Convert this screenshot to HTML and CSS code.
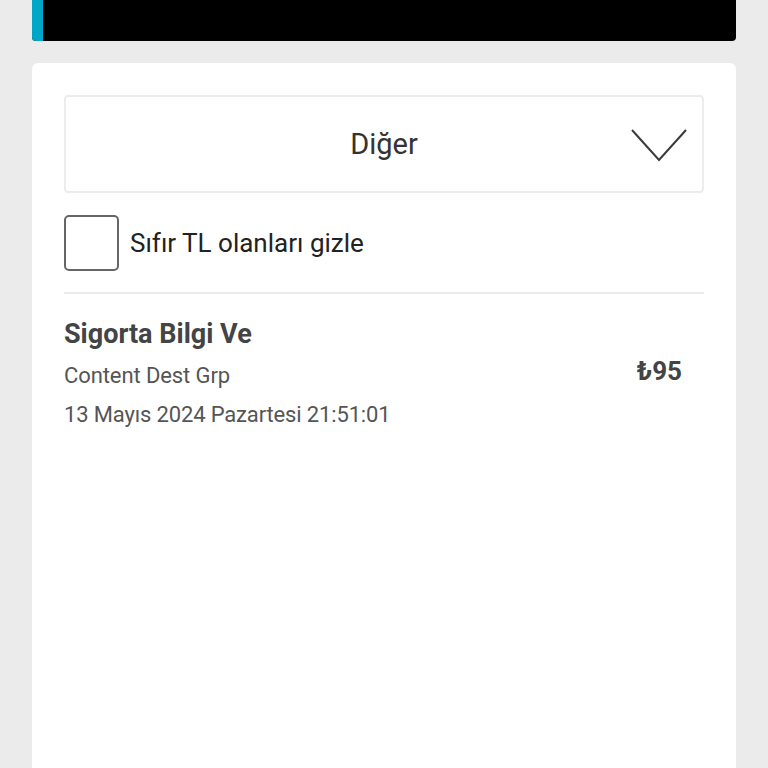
FILE: index.html
```html
<!DOCTYPE html>
<html lang="tr">
<head>
<meta charset="utf-8">
<link rel="stylesheet" href="styles.css">
</head>
<body>
<div class="page">
  <div class="topbar"><div class="accent"></div></div>
  <div class="card">
    <div class="select">
      <span class="select-text">Diğer</span>
      <svg class="chevron" width="56" height="33" viewBox="0 0 56 33"><path d="M1 1 L28 31 L55 1" fill="none" stroke="#3a3a3a" stroke-width="2"/></svg>
    </div>
    <label class="check-row">
      <span class="checkbox"></span>
      <span class="check-label">Sıfır TL olanları gizle</span>
    </label>
    <div class="divider"></div>
    <div class="item">
      <div class="item-info">
        <div class="item-title">Sigorta Bilgi Ve</div>
        <div class="item-sub">Content Dest Grp</div>
        <div class="item-date">13 Mayıs 2024 Pazartesi 21:51:01</div>
      </div>
      <div class="item-amount">₺95</div>
    </div>
  </div>
</div>
</body>
</html>
```
FILE: styles.css
```css
html, body {
  margin: 0;
  padding: 0;
  background: #ebebeb;
  font-family: Roboto, "Noto Sans", sans-serif;
  color: #333;
}
.page {
  padding: 0 32px;
  height: 768px;
  overflow: hidden;
}
.topbar {
  height: 41px;
  background: #000;
  border-radius: 0 0 4px 4px;
  display: flex;
}
.accent {
  width: 11px;
  background: #00a6c8;
  border-radius: 0 0 0 4px;
}
.card {
  margin-top: 22px;
  background: #fff;
  border-radius: 6px;
  padding: 32px 32px 0;
  min-height: 720px;
}
.select {
  height: 94px;
  border: 2px solid #ececec;
  border-radius: 4px;
  display: flex;
  align-items: center;
  justify-content: center;
  position: relative;
}
.select-text {
  font-size: 29px;
  color: #333;
}
.chevron {
  position: absolute;
  right: 15px;
  top: 32px;
}
.check-row {
  display: flex;
  align-items: center;
  margin-top: 22px;
  gap: 11px;
}
.checkbox {
  border: 2px solid #666;
  border-radius: 5px;
  width: 51px;
  height: 52px;
}
.check-label {
  font-size: 26px;
  color: #222;
}
.divider {
  height: 2px;
  background: #ebebeb;
  margin-top: 21px;
}
.item {
  display: flex;
  align-items: center;
  justify-content: space-between;
  padding: 22px 22px 0 0;
}
.item-title {
  font-size: 27px;
  font-weight: 700;
  color: #444;
  line-height: 36px;
}
.item-sub {
  font-size: 22px;
  color: #555;
  line-height: 38px;
  margin-top: 5px;
  letter-spacing: -0.1px;
}
.item-date {
  font-size: 22px;
  color: #555;
  line-height: 38px;
  margin-top: 1px;
  letter-spacing: -0.15px;
}
.item-amount {
  font-size: 26px;
  font-weight: 700;
  color: #444;
  margin-top: -8px;
}
```
